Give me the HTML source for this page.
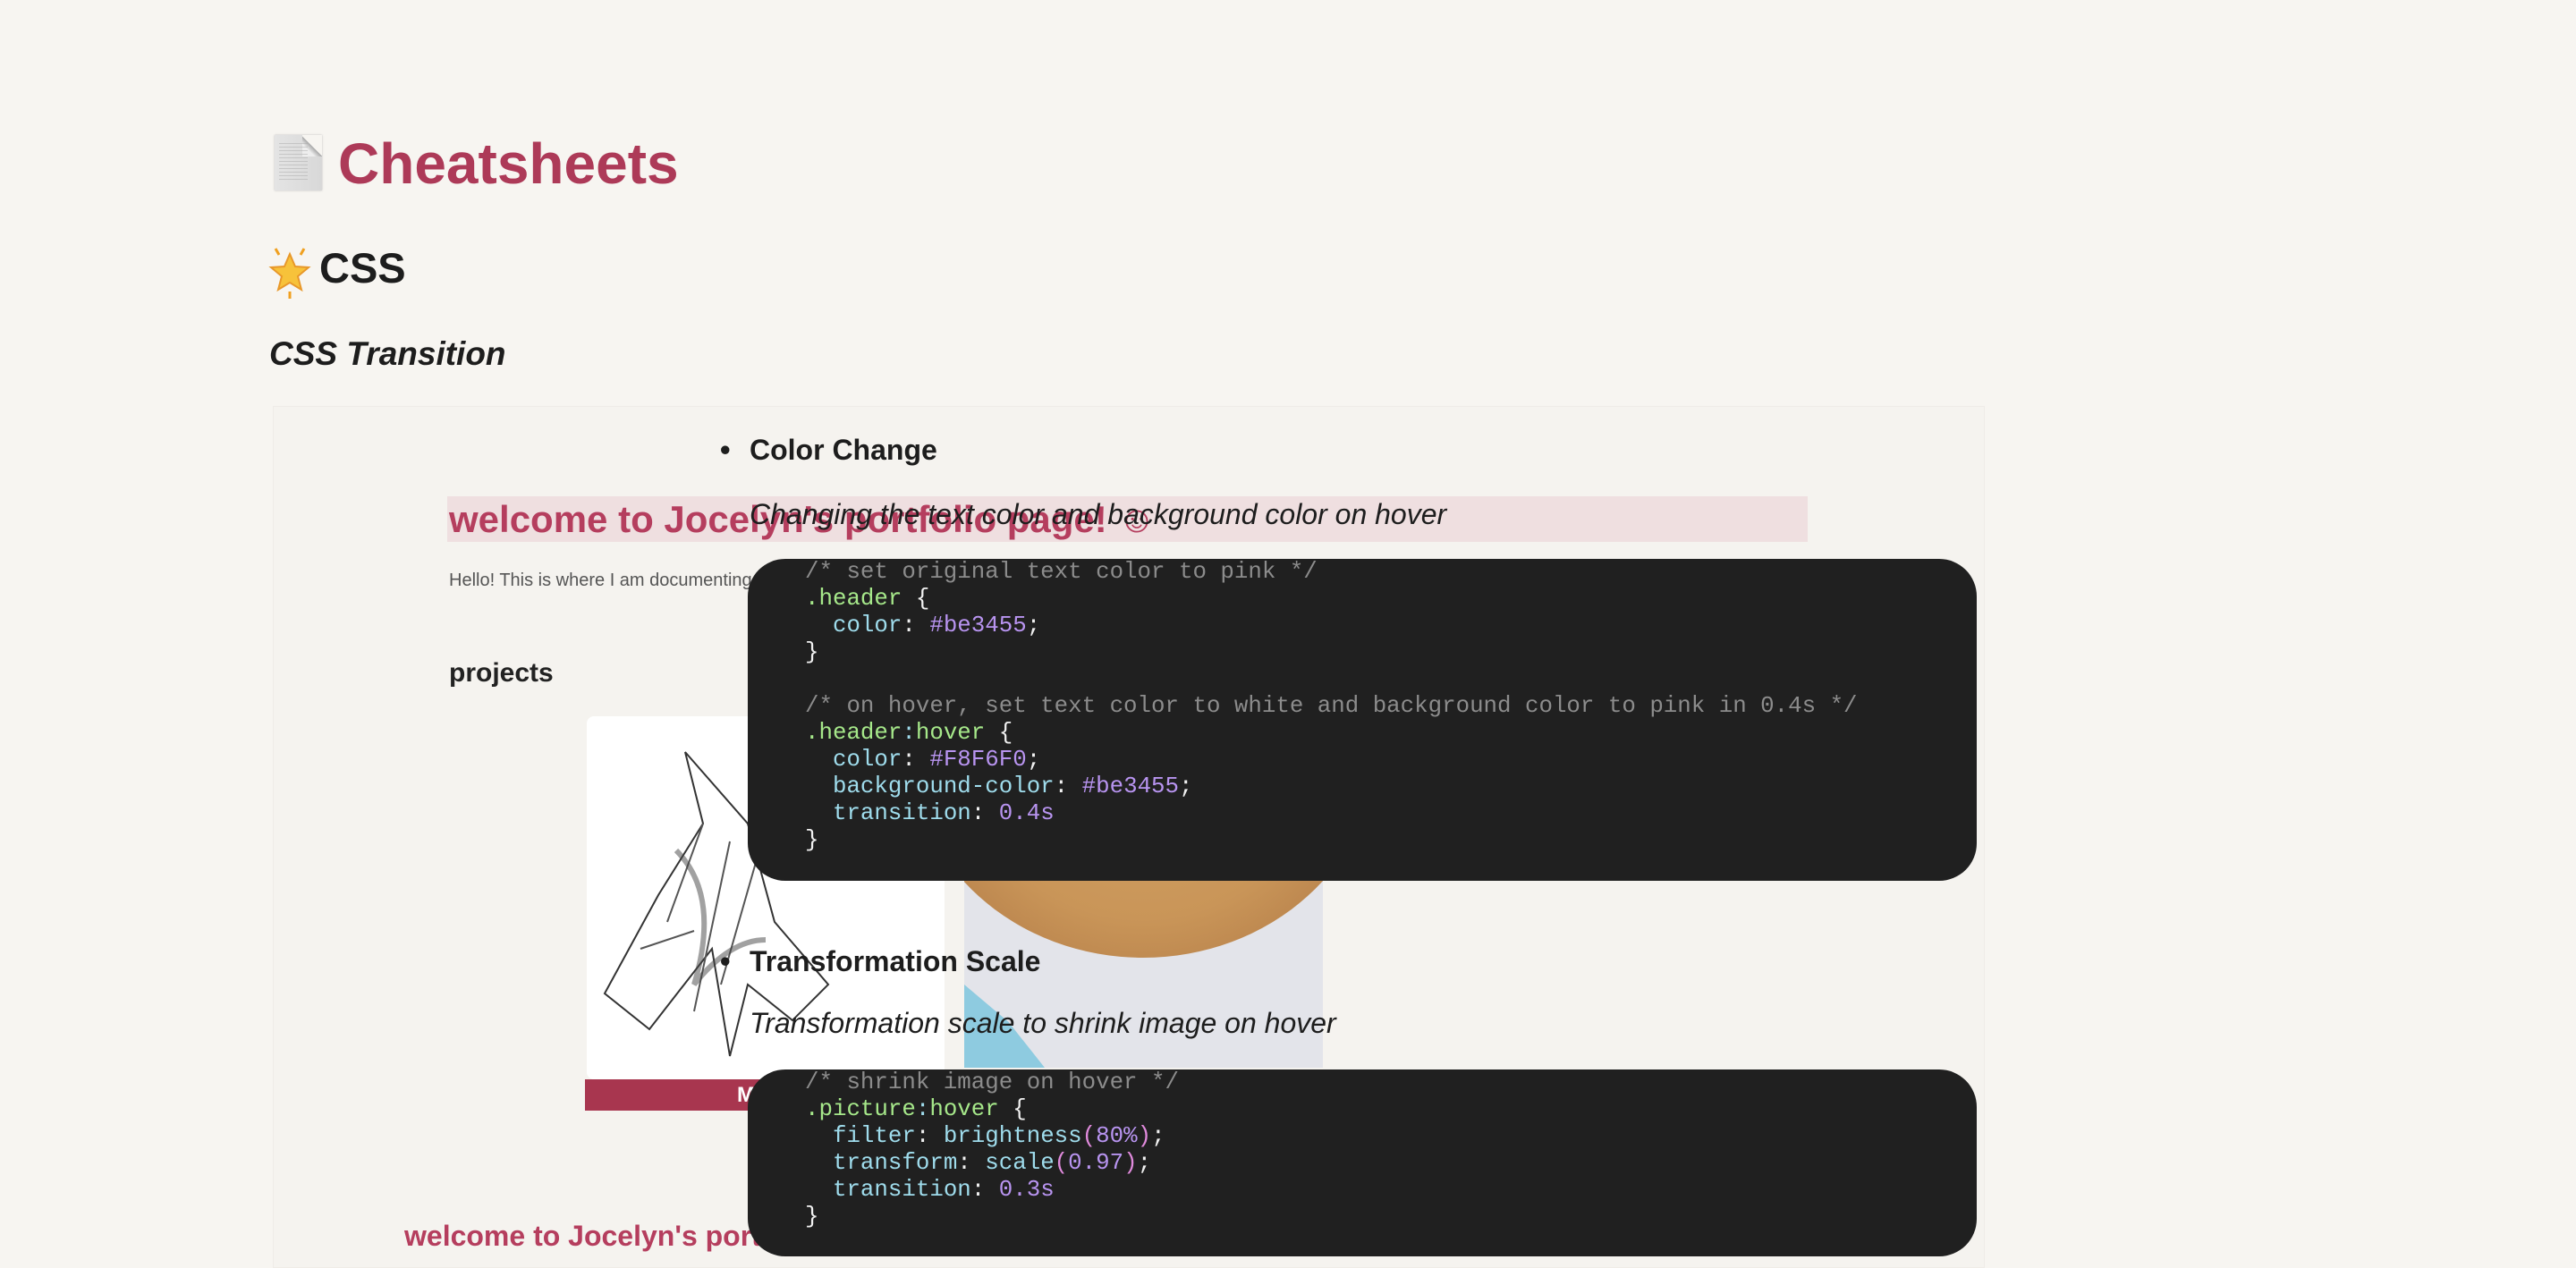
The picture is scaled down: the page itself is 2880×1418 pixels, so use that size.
<!DOCTYPE html>
<html><head><meta charset="utf-8"><style>
*{margin:0;padding:0;box-sizing:border-box}
html,body{width:2880px;height:1418px;overflow:hidden;background:#f7f5f1;font-family:"Liberation Sans",sans-serif;color:#1d1d1d}
.abs{position:absolute}
.code{position:absolute;left:836px;width:1374px;background:#202020;border-radius:42px;font-family:"Liberation Mono",monospace;font-size:25.8px;line-height:30px;color:#f0f0f0;padding-left:64px;white-space:pre}
.c{color:#8c8c8c}.s{color:#a6e88a}.p{color:#9fdcec}.v{color:#b894f0}.k{color:#e08adc}
</style></head><body>
<div class="abs" style="left:307px;top:151px;width:53px;height:62px;background:linear-gradient(90deg,#e4e4e4,#d8d8d8);box-shadow:0 0 2px #bbb"></div>
<div class="abs" style="left:338px;top:151px;width:22px;height:24px;background:linear-gradient(225deg,#f7f5f1 50%,#aaa 52%,#eee 70%)"></div>
<div class="abs" style="left:312px;top:160px;width:32px;height:44px;background:repeating-linear-gradient(180deg,#aaa 0 1px,transparent 1px 4px);opacity:.5"></div>
<div class="abs" style="left:378px;top:140px;font-size:64px;font-weight:bold;color:#ad3a58;line-height:86px">Cheatsheets</div>
<svg class="abs" style="left:300px;top:272px" width="48" height="62" viewBox="0 0 48 62"><polygon points="24,12 30,26 45,27 33,37 37,52 24,44 11,52 15,37 3,27 18,26" fill="#f7c23a" stroke="#e8982a" stroke-width="2"/><path d="M8 6l4 7M40 6l-4 7M24 54v8" stroke="#f0a020" stroke-width="3"/></svg>
<div class="abs" style="left:357px;top:270px;font-size:47px;font-weight:bold;line-height:60px">CSS</div>
<div class="abs" style="left:301px;top:371px;font-size:37px;font-weight:bold;font-style:italic;line-height:50px">CSS Transition</div>
<div class="abs" style="left:305px;top:454px;width:1914px;height:964px;background:#f5f3ef;border:1px solid #efece7"></div>
<div class="abs" style="left:500px;top:555px;width:1521px;height:51px;background:#efdfe0"></div>
<div class="abs" style="left:502px;top:556px;font-size:42px;font-weight:bold;color:#b53e5e;line-height:50px;white-space:nowrap">welcome to Jocelyn's portfolio page! ☺</div>
<div class="abs" style="left:502px;top:636px;font-size:20px;color:#555;line-height:26px">Hello! This is where I am documenting</div>
<div class="abs" style="left:502px;top:735px;font-size:30px;font-weight:bold;color:#222;line-height:36px">projects</div>
<div class="abs" style="left:656px;top:801px;width:400px;height:406px;background:#fff;border-radius:8px"></div>
<svg class="abs" style="left:656px;top:801px" width="400" height="406" viewBox="0 0 400 406" fill="none" stroke="#333" stroke-width="2"><path d="M110 40 L130 120 L80 200 L20 310 L70 350 L140 260 L160 380 L180 300 L230 340 L270 300 L210 230 L180 120 Z"/><path d="M130 120 L90 230 M160 140 L120 330 M190 160 L150 300 M60 260 L120 240" stroke="#555"/><path d="M100 150 Q150 200 120 300 Q160 250 200 250" stroke="#444" stroke-width="6" opacity=".5"/></svg>
<div class="abs" style="left:654px;top:1207px;width:403px;height:35px;background:#a8364f;color:#fff;font-weight:bold;font-size:24px;line-height:35px;padding-left:170px">M</div>
<div class="abs" style="left:1078px;top:801px;width:401px;height:393px;background:#e3e4ea;overflow:hidden">
 <div class="abs" style="left:-60px;top:-200px;width:520px;height:470px;border-radius:50%;background:radial-gradient(ellipse at 50% 40%,#d6a76a 0%,#c99558 60%,#a87040 100%)"></div>
 <div class="abs" style="left:0;top:300px;width:90px;height:93px;background:#8ecbe0;clip-path:polygon(0 0,55% 45%,100% 100%,0 100%)"></div>
</div>
<div class="abs" style="left:452px;top:1362px;font-size:32px;font-weight:bold;color:#b53e5e;line-height:40px;white-space:nowrap">welcome to Jocelyn's portfolio</div>
<div class="abs" style="left:805px;top:482px;font-size:33px;font-weight:bold;line-height:42px">•</div>
<div class="abs" style="left:838px;top:482px;font-size:32px;font-weight:bold;line-height:42px">Color Change</div>
<div class="abs" style="left:838px;top:555px;font-size:32px;font-style:italic;line-height:40px">Changing the text color and background color on hover</div>
<div class="code" style="top:625px;height:360px"><span class="c">/* set original text color to pink */</span>
<span class="s">.header</span> {
  <span class="p">color</span>: <span class="v">#be3455</span>;
}

<span class="c">/* on hover, set text color to white and background color to pink in 0.4s */</span>
<span class="s">.header</span><span class="p">:</span><span class="s">hover</span> {
  <span class="p">color</span>: <span class="v">#F8F6F0</span>;
  <span class="p">background-color</span>: <span class="v">#be3455</span>;
  <span class="p">transition</span>: <span class="v">0.4s</span>
}</div>
<div class="abs" style="left:805px;top:1054px;font-size:33px;font-weight:bold;line-height:42px">•</div>
<div class="abs" style="left:838px;top:1054px;font-size:32px;font-weight:bold;line-height:42px">Transformation Scale</div>
<div class="abs" style="left:838px;top:1124px;font-size:32px;font-style:italic;line-height:40px">Transformation scale to shrink image on hover</div>
<div class="code" style="top:1196px;height:209px"><span class="c">/* shrink image on hover */</span>
<span class="s">.picture</span><span class="p">:</span><span class="s">hover</span> {
  <span class="p">filter</span>: <span class="p">brightness</span><span class="k">(</span><span class="v">80%</span><span class="k">)</span>;
  <span class="p">transform</span>: <span class="p">scale</span><span class="k">(</span><span class="v">0.97</span><span class="k">)</span>;
  <span class="p">transition</span>: <span class="v">0.3s</span>
}</div>
</body></html>
